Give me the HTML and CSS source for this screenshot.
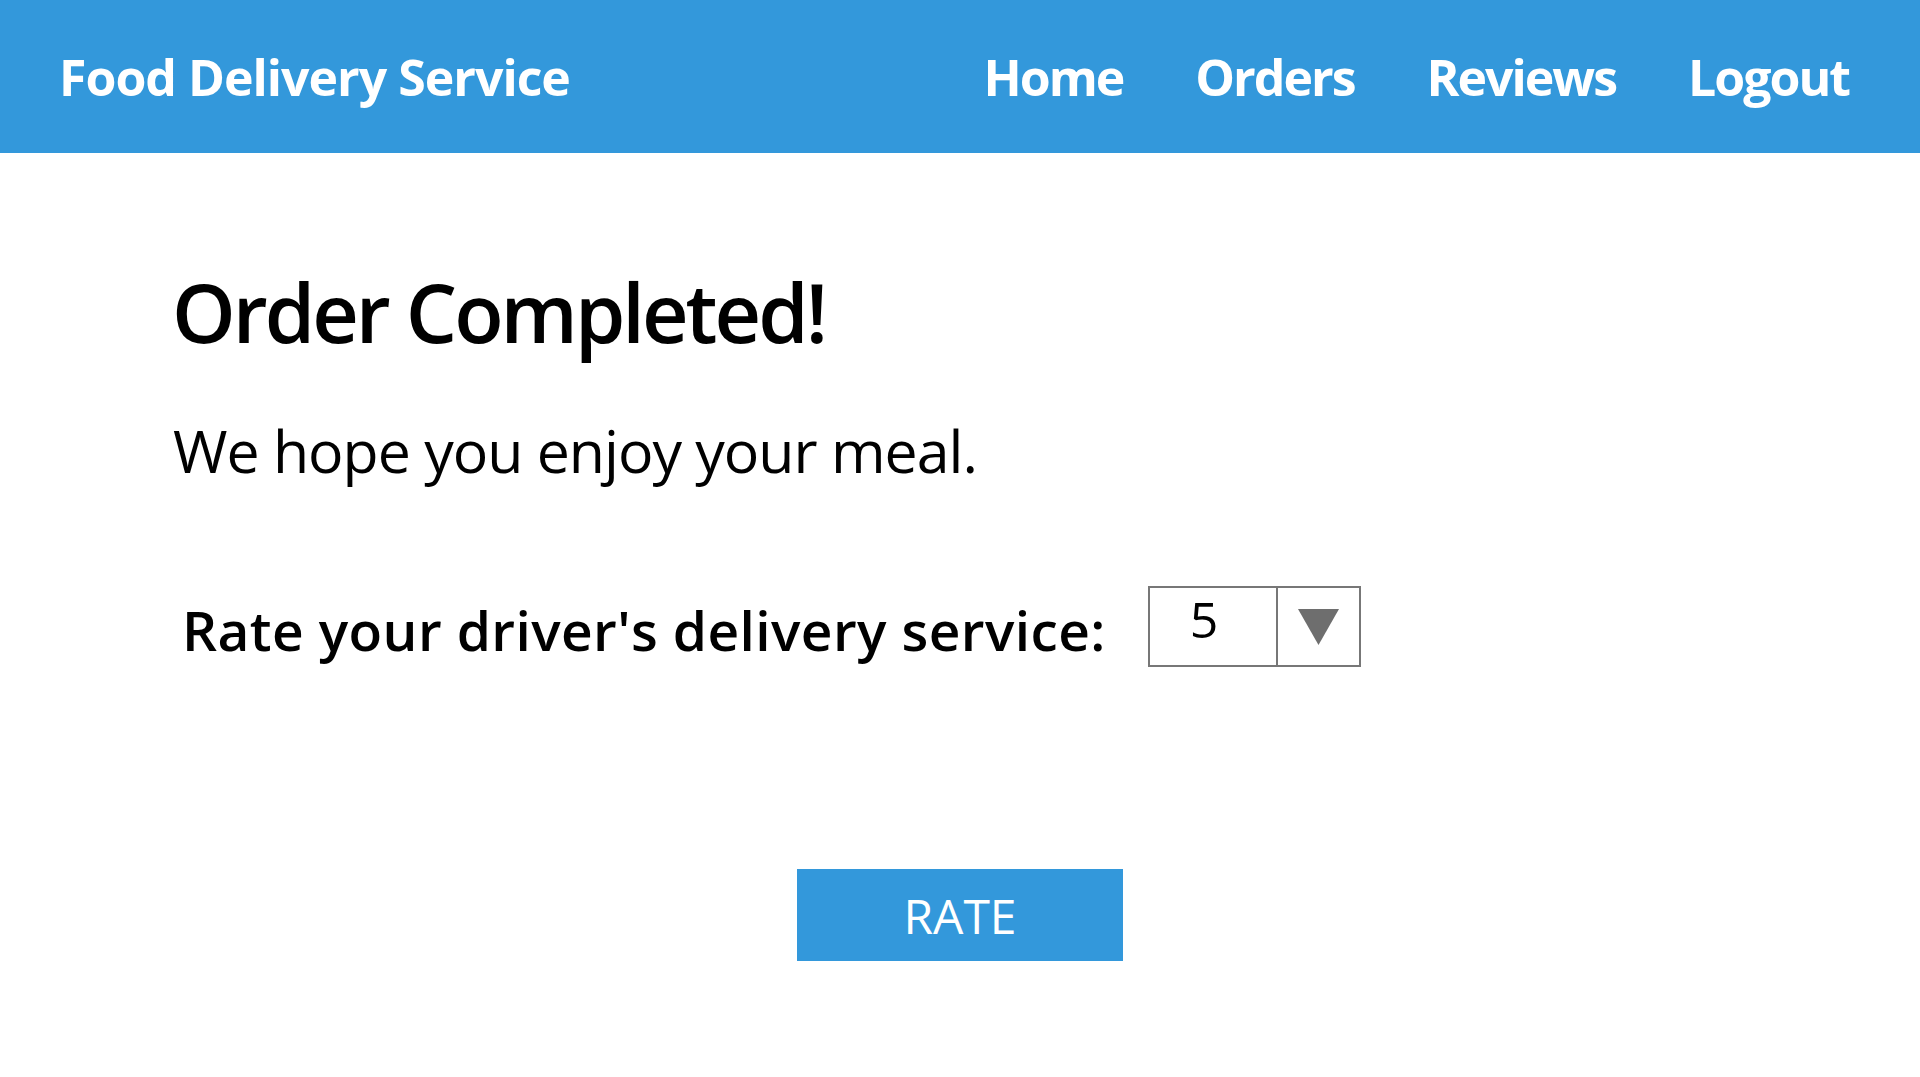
FILE: index.html
```html
<!DOCTYPE html>
<html lang="en">
<head>
<meta charset="utf-8">
<title>Food Delivery Service</title>
<link rel="stylesheet" href="styles.css">
</head>
<body>
<header class="topbar">
  <div class="brand">Food Delivery Service</div>
  <nav class="nav">
    <a href="#" class="nav-link">Home</a>
    <a href="#" class="nav-link">Orders</a>
    <a href="#" class="nav-link">Reviews</a>
    <a href="#" class="nav-link">Logout</a>
  </nav>
</header>
<main class="content">
  <h1 class="title">Order Completed!</h1>
  <p class="message">We hope you enjoy your meal.</p>
  <div class="rate-row">
    <span class="rate-label">Rate your driver's delivery service:</span>
    <div class="select">
      <span class="select-value">5</span>
      <span class="select-arrow"><svg width="41" height="36" viewBox="0 0 41 36"><polygon points="0,0 41,0 20.5,36" fill="#6e6e6e"/></svg></span>
    </div>
  </div>
  <div class="actions">
    <button class="rate-btn">RATE</button>
  </div>
</main>
</body>
</html>
```
FILE: styles.css
```css
html, body {
  margin: 0;
  padding: 0;
  background: #ffffff;
  font-family: "Open Sans", "Noto Sans", sans-serif;
  color: #000;
}
.topbar {
  height: 153px;
  background: #3398db;
  display: flex;
  align-items: center;
  justify-content: space-between;
  padding: 0 71px 0 59px;
  box-sizing: border-box;
  color: #fff;
}
.brand {
  font-size: 50px;
  font-weight: 700;
  letter-spacing: -1px;
}
.nav {
  display: flex;
  gap: 72px;
}
.nav-link {
  color: #fff;
  text-decoration: none;
  font-size: 50px;
  font-weight: 700;
  letter-spacing: -2px;
}
.content {
  padding: 0 0 0 172px;
}
.title {
  margin: 109px 0 0 0;
  font-size: 81px;
  line-height: 100px;
  font-weight: 600;
  letter-spacing: -3px;
}
.message {
  margin: 48px 0 0 0;
  padding-left: 1px;
  font-size: 59px;
  line-height: 80px;
  font-weight: 400;
  letter-spacing: -1px;
}
.rate-row {
  display: flex;
  align-items: flex-start;
  margin-top: 96px;
  padding-left: 10px;
}
.rate-label {
  font-size: 55px;
  line-height: 81px;
  padding-top: 3px;
  font-weight: 600;
  letter-spacing: 0.4px;
}
.select {
  margin-left: 42px;
  width: 213px;
  height: 81px;
  box-sizing: border-box;
  border: 2px solid #777;
  display: flex;
}
.select-value {
  width: 128px;
  box-sizing: border-box;
  border-right: 2px solid #777;
  font-size: 50px;
  line-height: 63px;
  padding-left: 40px;
}
.select-arrow {
  flex: 1;
  display: flex;
  align-items: center;
  justify-content: center;
}
.actions {
  display: flex;
  padding-right: 172px;
  justify-content: center;
  margin-top: 199px;
}
.rate-btn {
  width: 326px;
  height: 92px;
  background: #3398db;
  border: none;
  color: #fff;
  font-family: "Open Sans", "Noto Sans", sans-serif;
  font-size: 48px;
  font-weight: 400;
  padding: 0;
}
```
